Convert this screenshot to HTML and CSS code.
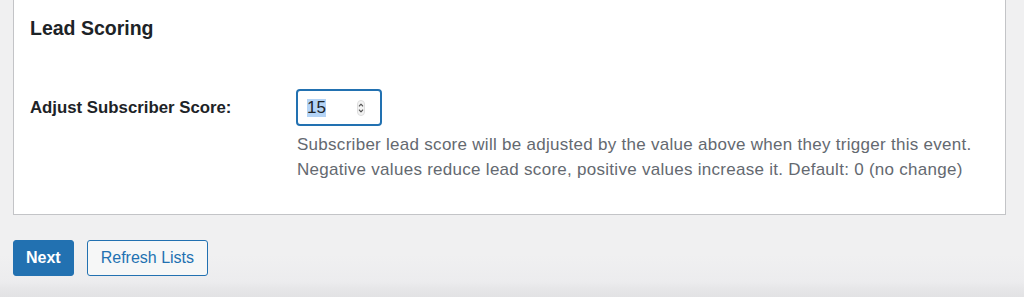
FILE: index.html
```html
<!DOCTYPE html>
<html lang="en">
<head>
<meta charset="utf-8">
<title>Lead Scoring</title>
<link rel="stylesheet" href="styles.css">
</head>
<body>
<div class="wrap">
  <section class="card">
    <h2 class="card-title">Lead Scoring</h2>
    <div class="field-row">
      <label class="field-label" for="score">Adjust Subscriber Score:</label>
      <div class="field-body">
        <div class="number-input" id="score" role="spinbutton" aria-valuenow="15">
          <span class="number-value">15</span>
          <svg class="stepper" width="8" height="16" viewBox="0 0 8 16" aria-hidden="true">
            <rect x="0.5" y="0.5" width="7" height="15" rx="3.5" fill="#f3f3f3" stroke="#dedede"/>
            <path d="M2.3 6 L4 4.2 L5.7 6" fill="none" stroke="#555" stroke-width="1.1" stroke-linecap="round" stroke-linejoin="round"/>
            <path d="M2.3 10 L4 11.8 L5.7 10" fill="none" stroke="#555" stroke-width="1.1" stroke-linecap="round" stroke-linejoin="round"/>
          </svg>
        </div>
      </div>
    </div>
    <p class="description">Subscriber lead score will be adjusted by the value above when they trigger this event.<br>Negative values reduce lead score, positive values increase it. Default: 0 (no change)</p>
  </section>
  <div class="actions">
    <button class="btn btn-primary" type="button">Next</button>
    <button class="btn btn-secondary" type="button">Refresh Lists</button>
  </div>
</div>
</body>
</html>
```

FILE: styles.css
```css
html, body {
  margin: 0;
  height: 100%;
}

body {
  font-family: "Liberation Sans", Arial, sans-serif;
  background: linear-gradient(to bottom, #f0f0f1 0, #f0f0f1 255px, #ececee 282px, #e6e6e8 289px, #e2e2e4 297px);
  color: #1d2327;
}

.wrap {
  padding: 0 18px 0 13px;
}

.card {
  background: #fff;
  border: 1px solid #c3c4c7;
  border-top: 0;
  padding: 16px 16px 32px 16px;
}

.card-title {
  margin: 0;
  font-size: 19.5px;
  line-height: 25px;
  font-weight: 700;
  color: #1d2327;
}

.field-row {
  display: flex;
  align-items: baseline;
  margin-top: 48px;
}

.field-label {
  width: 266px;
  flex: none;
  font-size: 16.8px;
  font-weight: 700;
  color: #1d2327;
}

.number-input {
  box-sizing: border-box;
  width: 86px;
  height: 37px;
  border: 2px solid #2271b1;
  border-radius: 4px;
  padding: 0 15px 0 9px;
  display: flex;
  align-items: center;
  justify-content: space-between;
  font-size: 17px;
  line-height: 33px;
  color: #1d2327;
  background: #fff;
}

.number-value {
  background: #b4d4f6;
  line-height: 18px;
}

.stepper {
  display: block;
  margin-top: 1px;
}

.description {
  margin: 6px 0 0 267px;
  font-size: 17px;
  letter-spacing: 0.28px;
  line-height: 25px;
  color: #646970;
}

.actions {
  display: flex;
  gap: 13px;
  margin-top: 25px;
}

.btn {
  box-sizing: border-box;
  height: 36px;
  border-radius: 3px;
  border: 1px solid #2271b1;
  font-family: "Liberation Sans", Arial, sans-serif;
  font-size: 16px;
  padding: 0 13px;
  cursor: pointer;
}

.btn-primary {
  background: #2271b1;
  color: #fff;
  font-weight: 700;
  padding: 0 12px;
}

.btn-secondary {
  background: #f6f7f7;
  color: #2271b1;
  font-weight: 400;
}
```
